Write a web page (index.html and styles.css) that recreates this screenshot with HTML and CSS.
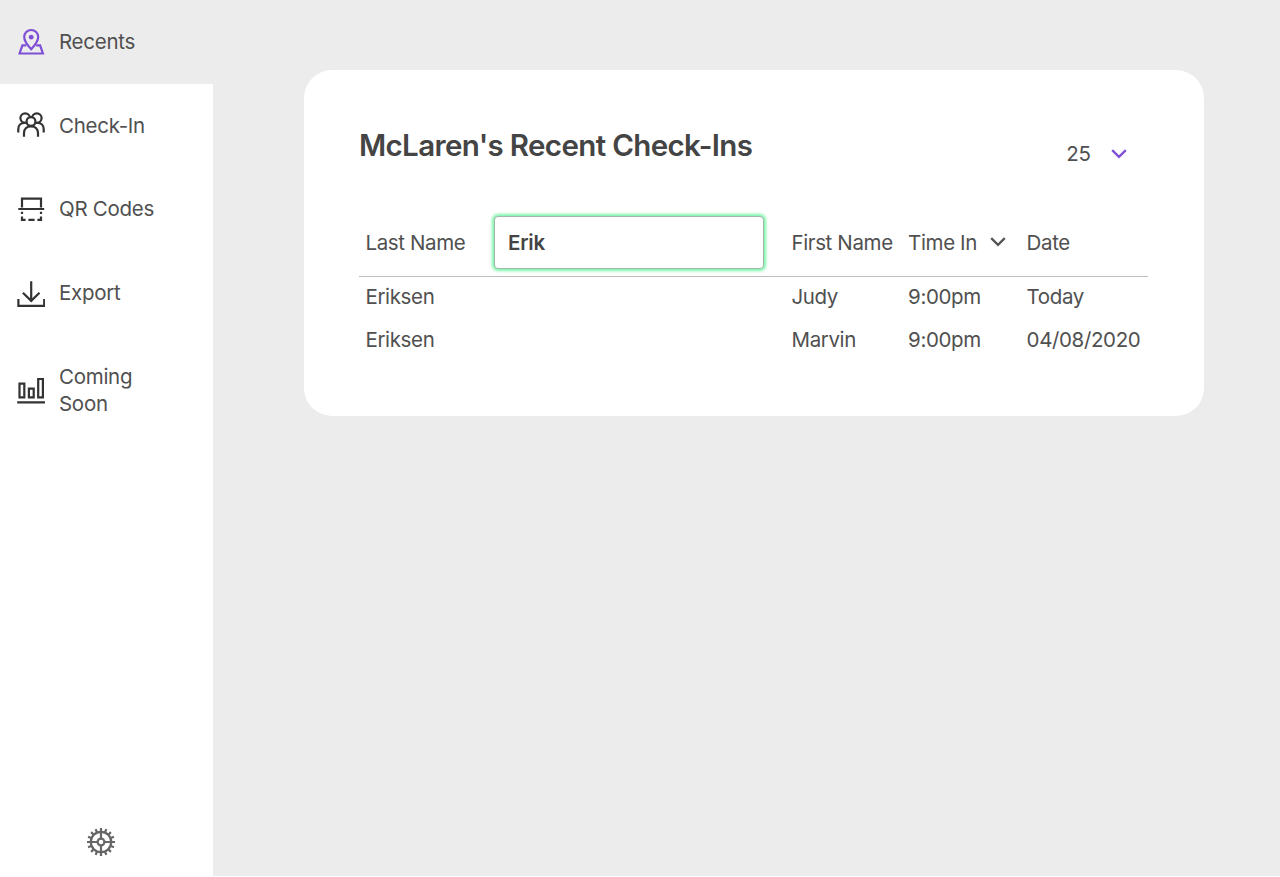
FILE: index.html
```html
<!DOCTYPE html>
<html lang="en">
<head>
<meta charset="utf-8">
<title>McLaren's Recent Check-Ins</title>
<link rel="stylesheet" href="styles.css">
</head>
<body>
<div class="app">
  <nav class="sidebar">
    <a class="item active">
      <svg class="icon" viewBox="0 0 28 28"><path d="M14.200 21.200C10.600 17.400 7.200 13.500 7.200 9a7 7 0 0 1 14 0C21.200 13.500 17.800 17.400 14.200 21.200Z"/><circle class="solid" cx="14.200" cy="9.200" r="2.400"/><path d="M9.300 17.300H5.400L2.600 25.500H25.900L23.100 17.300H19.100"/></svg>
      <span>Recents</span>
    </a>
    <a class="item">
      <svg class="icon" viewBox="0 0 28 28"><circle cx="8.200" cy="7.100" r="4.800"/><circle cx="19.800" cy="7.100" r="4.800"/><circle class="front" cx="14" cy="10.500" r="4.400"/><path d="M1.300 21.500v-3.500c0-3.500 2.600-6.200 6.200-6.200M26.700 21.500v-3.500c0-3.500-2.600-6.200-6.200-6.200M7 25.700v-3.600c0-4.100 3-6.800 7-6.800s7 2.700 7 6.800v3.600"/></svg>
      <span>Check-In</span>
    </a>
    <a class="item">
      <svg class="icon" viewBox="0 0 28 28"><path d="M5 12.500V3.700H24V12.500M1.300 14H27.200M5 16.700V19.100M24 16.700V19.100M5 21.500V24.900H8.600M11.400 24.900H17.600M20.400 24.900H24V21.500"/></svg>
      <span>QR Codes</span>
    </a>
    <a class="item">
      <svg class="icon" viewBox="0 0 28 28"><path d="M14.200 2.200V22.200M5.900 13.700L14.200 21.900L22.500 13.700M1.400 19.900V26.800H27.200V19.900"/></svg>
      <span>Export</span>
    </a>
    <a class="item tall">
      <svg class="icon" viewBox="0 0 28 28"><path d="M2.500 7.700H7.300V21.300H2.500ZM11.900 12.700H16.700V21.300H11.900ZM21.200 3H25.900V21.300H21.200ZM.2 26.400H28"/></svg>
      <span>Coming<br>Soon</span>
    </a>
    <a class="settings">
      <svg class="icon" viewBox="0 0 28 28"><circle cx="14" cy="14" r="10.200"/><circle cx="14" cy="14" r="3.400"/><path d="M14 0V10.600M14 17.400V28M0 14H10.600M17.400 14H28"/><path d="M14 0V4M14 24V28" transform="rotate(22.500 14 14)"/><path d="M14 0V4M14 24V28" transform="rotate(45 14 14)"/><path d="M14 0V4M14 24V28" transform="rotate(67.500 14 14)"/><path d="M14 0V4M14 24V28" transform="rotate(112.500 14 14)"/><path d="M14 0V4M14 24V28" transform="rotate(135 14 14)"/><path d="M14 0V4M14 24V28" transform="rotate(157.500 14 14)"/></svg>
    </a>
  </nav>
  <main class="content">
    <section class="card">
      <header class="head">
        <h1>McLaren's Recent Check-Ins</h1>
        <div class="count"><span>25</span><svg class="chevron purple" viewBox="0 0 16 10"><path d="M1.200 1.200L8 7.800L14.800 1.200"/></svg></div>
      </header>
      <div class="row labels">
        <div class="last"><span>Last Name</span><input class="search" type="text" value="Erik"></div>
        <div class="label">First Name</div>
        <div class="time label"><span>Time In</span><svg class="chevron" viewBox="0 0 16 10"><path d="M1.200 1.200L8 7.800L14.800 1.200"/></svg></div>
        <div class="label">Date</div>
      </div>
      <div class="row"><div>Eriksen</div><div>Judy</div><div>9:00pm</div><div>Today</div></div>
      <div class="row"><div>Eriksen</div><div>Marvin</div><div>9:00pm</div><div>04/08/2020</div></div>
    </section>
  </main>
</div>
</body>
</html>
```
FILE: styles.css
```css
* { box-sizing: border-box; }
body {
  margin: 0;
  background: #fff;
  color: #505050;
  font: 400 20.5px/27px Inter, "Liberation Sans", sans-serif;
  letter-spacing: -0.37px;
  overflow: hidden;
}
.app { display: flex; height: 876px; background: #ececec; }
.sidebar {
  width: 212.5px;
  display: flex;
  flex-direction: column;
  background: #fff;
}
.item {
  display: flex;
  align-items: center;
  gap: 14px;
  min-height: 83.7px;
  padding: 27.400px 17px 28px;
  letter-spacing: -0.28px;
}
.tall { padding-top: 28.400px; }
.active { background: #ececec; }
.icon {
  width: 28px;
  height: 28px;
  flex: none;
  fill: none;
  stroke: #333;
  stroke-width: 2.200;
}
.active .icon { stroke: #7f4fd6; }
.active .solid { fill: #7f4fd6; stroke: none; }
.front { fill: #fff; }
.settings { margin: auto 0 20px 87px; height: 28px; }
.settings .icon { stroke: #666; }
.content { flex: 1; padding: 69.600px 76.500px 0 91px; }
.card {
  height: 346.300px;
  padding: 56.500px 56px 0 55.500px;
  border-radius: 28px;
  background: #fff;
}
.head { display: flex; justify-content: space-between; height: 86px; }
h1 {
  margin: 0;
  font-size: 29.500px;
  line-height: 38px;
  font-weight: 600;
  letter-spacing: -0.64px;
  color: #444;
  white-space: nowrap;
}
.count { display: flex; align-items: center; gap: 20px; height: 27px; margin: 14.200px 21px 0 0; }
.chevron { width: 16px; height: 10px; fill: none; stroke: #555; stroke-width: 2.300; }
.purple { stroke: #7f4fd6; }
.row {
  display: grid;
  grid-template-columns: 426px 116.600px 118.500px 1fr;
  align-items: center;
  height: 42.3px;
  padding-left: 6.500px;
  white-space: nowrap;
}
.labels { height: 64.700px; padding-bottom: 2.400px; border-bottom: 1.500px solid #bdbdbd; }
.labels + .row { margin-top: -1px; }
.label { padding-bottom: 1px; }
.last { display: flex; align-items: center; }
.last span { width: 128px; }
.search {
  width: 270.500px;
  height: 53px;
  padding: 0 13.500px;
  border: 1.500px solid #a4b5aa;
  border-radius: 4px;
  outline: none;
  box-shadow: 0 0 3px 2px #7df5aa;
  background: #fff;
  color: #444;
  font: 600 20.5px/27px Inter, "Liberation Sans", sans-serif;
  letter-spacing: -0.2px;
}
.time { display: flex; align-items: center; gap: 13px; }
```
